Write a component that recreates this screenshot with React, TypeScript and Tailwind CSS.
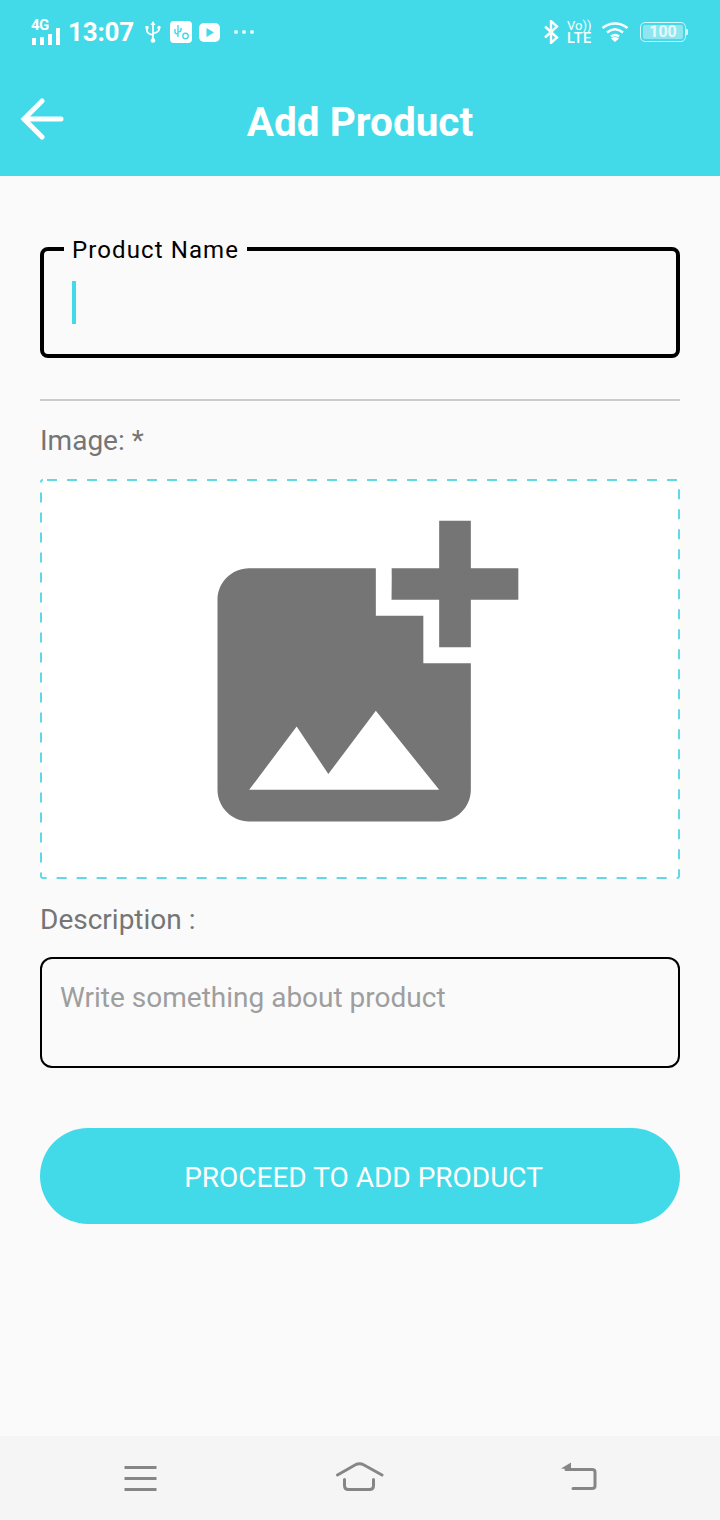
export default function App() {
  return (
    <div className="w-[720px] h-[1520px] flex flex-col bg-[#fafafa] font-['Roboto',sans-serif] overflow-hidden">
      <header className="h-[176px] shrink-0 bg-[#42dae8] flex flex-col text-white">
        <div className="h-[64px] flex items-center justify-between pl-[31px] pr-[32px]">
          <div className="flex items-center">
            <div className="relative w-[30px] h-[30px] mr-[7px]">
              <span className="absolute left-0 top-[1px] text-[15px] leading-[15px] font-bold tracking-[-0.5px]">4G</span>
              <svg width="30" height="30" viewBox="0 0 30 30" className="absolute left-0 top-0" fill="#fff">
                <rect x="1" y="21" width="4" height="7" />
                <rect x="9" y="20" width="4" height="8" />
                <rect x="17" y="17" width="4" height="11" />
                <rect x="25" y="11" width="4" height="17" />
              </svg>
            </div>
            <span className="text-[26px] leading-[30px] font-bold tracking-[-0.2px]">13:07</span>
            <svg width="16" height="22" viewBox="0 0 16 22" className="ml-[11px]" fill="none" stroke="#fff" strokeWidth="1.800">
              <path d="M8 2v18M2 7v3c0 2 2 3 6 4M14 7v1.500c0 2-2 3-6 4" />
              <path d="M8 0l2.500 4h-5z" fill="#fff" stroke="none" />
              <circle cx="8" cy="19.500" r="2.300" fill="#fff" stroke="none" />
              <rect x="0.500" y="5" width="3" height="3" fill="#fff" stroke="none" />
              <circle cx="14" cy="6.500" r="1.700" fill="#fff" stroke="none" />
            </svg>
            <svg width="22" height="22" viewBox="0 0 22 22" className="ml-[9px]">
              <rect x="0" y="0" width="22" height="22" rx="4" fill="#fff" />
              <path d="M8 4v12M5 8v3c0 1 1 2 3 2M11 7v2c0 1-1 2-3 2" fill="none" stroke="#42dae8" strokeWidth="1.400" />
              <circle cx="15.500" cy="15" r="2.700" fill="none" stroke="#42dae8" strokeWidth="1.400" />
            </svg>
            <svg width="21" height="19" viewBox="0 0 21 19" className="ml-[7px]">
              <rect x="0" y="0" width="21" height="19" rx="5" fill="#fff" />
              <path d="M7.500 5l7.500 4.500-7.500 4.500z" fill="#42dae8" />
            </svg>
            <svg width="22" height="6" viewBox="0 0 22 6" className="ml-[13px]" fill="#e4f9fb">
              <circle cx="3" cy="3" r="2" />
              <circle cx="11" cy="3" r="2" />
              <circle cx="19" cy="3" r="2" />
            </svg>
          </div>
          <div className="flex items-center">
            <svg width="16" height="24" viewBox="0 0 16 24" fill="none" stroke="#fff" strokeWidth="2.400">
              <path d="M2 6.500l12 11-6 5.500V1l6 5.500L2 17.500" />
            </svg>
            <div className="ml-[8px] w-[26px] flex flex-col items-start leading-none">
              <span className="text-[13px] leading-[13px] font-normal">Vo))</span>
              <span className="text-[14.500px] leading-[14px] font-medium tracking-[0.6px]">LTE</span>
            </div>
            <svg width="28" height="22" viewBox="0 0 28 22" className="ml-[8px]" fill="none" stroke="#fff" strokeWidth="2.400">
              <path d="M1.500 7c7.500-6 17.500-6 25 0M6 11.500c5-4 11-4 16 0M10 15.500c2.500-2 5.500-2 8 0" />
              <path d="M10 17.500l4-2 4 2-4 3.500z" fill="#fff" stroke="none" />
            </svg>
            <div className="ml-[11px] flex items-center">
              <div className="w-[46px] h-[20px] rounded-[5px] border-[1.500px] border-[#d5f6fa] p-[2px] flex">
                <div className="flex-1 rounded-[2px] bg-[#8fe6ef] flex items-center justify-center">
                  <span className="text-[16px] leading-none font-bold text-[#e4f9fb]">100</span>
                </div>
              </div>
              <div className="w-[2px] h-[6px] bg-[#d5f6fa] rounded-r-[1px]" />
            </div>
          </div>
        </div>
        <div className="relative h-[112px] flex items-start justify-center">
          <svg width="44" height="42" viewBox="0 0 44 42" className="absolute left-[20px] top-[34px]" fill="none" stroke="#fff" strokeWidth="5" strokeLinecap="round" strokeLinejoin="miter">
            <path d="M41 21H6M22 3L4 21l18 18" />
          </svg>
          <h1 className="mt-[33px] text-[40.500px] leading-[50px] font-bold">Add Product</h1>
        </div>
      </header>

      <main className="flex-1 flex flex-col px-[40px]">
        <div className="relative mt-[71px] h-[111px] rounded-[8px] border-4 border-black">
          <span className="absolute left-[20px] top-[-15px] px-[8px] bg-[#fafafa] text-[24px] leading-[28px] tracking-[1.100px] text-black">Product Name</span>
          <div className="absolute left-[28px] top-[30px] w-[4px] h-[43px] bg-[#42dae8]" />
        </div>
        <div className="mt-[41px] h-[2px] bg-[#cccccc]" />
        <p className="mt-[24px] text-[28px] leading-[32px] text-[#757575]">Image: *</p>
        <div className="relative mt-[22px] h-[400px] bg-white flex items-center justify-center">
          <svg width="640" height="400" viewBox="0 0 640 400" fill="none" className="absolute left-0 top-0">
            <rect x="1" y="1" width="638" height="398" rx="2" stroke="#5fd9e6" strokeWidth="2" strokeDasharray="10 10" strokeDashoffset="16" />
          </svg>
          <svg width="380" height="380" viewBox="0 0 24 24" fill="#757575">
            <path d="M19 7v2.990s-1.990.010-2 0V7h-3s.010-1.990 0-2h3V2h2v3h3v2h-3zm-3 4V8h-3V5H5c-1.100 0-2 .9-2 2v12c0 1.100.9 2 2 2h12c1.100 0 2-.9 2-2v-8h-3zM5 19l3-4 2 3 3-4 4 5H5z" />
          </svg>
        </div>
        <p className="mt-[25px] text-[28px] leading-[32px] text-[#757575]">Description :</p>
        <div className="mt-[21px] h-[111px] rounded-[12px] border-2 border-black px-[18px] pt-[23px]">
          <span className="block text-[28px] leading-[32px] text-[#9e9e9e]">Write something about product</span>
        </div>
        <button className="mt-[60px] h-[96px] rounded-[48px] bg-[#42dae8] text-white text-[28px] leading-[32px] pl-[7px] pt-[4px] flex items-center justify-center">PROCEED TO ADD PRODUCT</button>
      </main>

      <nav className="h-[84px] shrink-0 bg-[#f5f5f5] flex items-start justify-between pl-[123px] pr-[123px] pt-[25px]">
        <svg width="36" height="30" viewBox="0 0 36 30" fill="none" stroke="#868686" strokeWidth="3">
          <path d="M1.500 6.500h32M1.500 17.500h32M1.500 28.500h32" />
        </svg>
        <svg width="50" height="34" viewBox="0 0 50 34" fill="none" stroke="#868686" strokeWidth="3" strokeLinecap="round">
          <path d="M2.500 14L20 4c3-1.600 6-1.600 9 0L47 14" />
          <path d="M9.500 18.500v6c0 3 1.500 4 4 4h21c2.500 0 4-1 4-4v-6" />
        </svg>
        <svg width="36" height="30" viewBox="0 0 36 30" fill="none" stroke="#868686" strokeWidth="3" strokeLinecap="round">
          <path d="M5 8.500h26c2 0 3 .8 3 2.500v14c0 2-1 2.500-3 2.500H12" />
          <path d="M0 7.500L10 1.500v7z" fill="#868686" stroke="none" />
        </svg>
      </nav>
    </div>
  );
}
